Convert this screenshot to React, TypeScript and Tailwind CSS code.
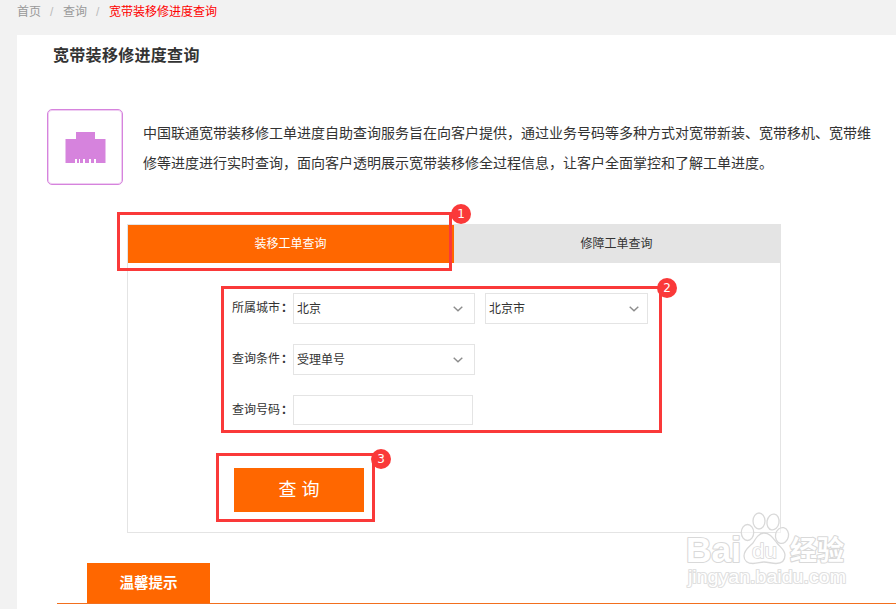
import React from "react";

function Chevron() {
  return (
    <svg width="10" height="6" viewBox="0 0 10 6" className="shrink-0" fill="none" stroke="#8c8c8c" strokeWidth="1.4">
      <path d="M0.7 0.7 L5 4.7 L9.3 0.7" />
    </svg>
  );
}

function Select({ value, size }: { value: string; size: string }) {
  return (
    <div className={`flex h-[31px] items-center justify-between border border-[#e4e4e4] bg-white pl-[3px] ${size}`}>
      <span>{value}</span>
      <Chevron />
    </div>
  );
}

function Label({ children }: { children: React.ReactNode }) {
  return (
    <span className="flex h-[29px] w-[61px] shrink-0 items-center gap-px whitespace-nowrap">
      <span>{children}</span>
      <span className="w-2.5 font-bold">：</span>
    </span>
  );
}

function Marker({ n, box, dot }: { n: number; box: string; dot: string }) {
  return (
    <div className={`pointer-events-none absolute border-3 border-[#fa3939] ${box}`}>
      <span
        className={`absolute flex size-5 items-center justify-center rounded-full bg-[#fa3939] font-['DejaVu_Sans',sans-serif] text-xs leading-none text-white ${dot}`}
      >
        {n}
      </span>
    </div>
  );
}

function Watermark() {
  return (
    <svg className="absolute top-[508px] left-[682px]" width="172" height="84" viewBox="0 0 172 84" fill="#fff" stroke="#d9d9d9">
      <text x="4" y="54" fontFamily="'Liberation Sans', sans-serif" fontWeight="bold" fontSize="35" strokeWidth="2.2" strokeLinejoin="round" paintOrder="stroke" textLength="55" lengthAdjust="spacingAndGlyphs">
        Bai
      </text>
      <g strokeWidth="1.3" fillOpacity="0.5">
        <ellipse cx="65.500" cy="24.500" rx="6.200" ry="8" />
        <ellipse cx="77" cy="13" rx="6" ry="8" />
        <ellipse cx="91" cy="14" rx="6" ry="8" transform="rotate(10 91 14)" />
        <ellipse cx="100" cy="27.500" rx="6.500" ry="8" transform="rotate(12 100 27.500)" />
        <path d="M82 25C77 25 74 30 71 35C67 39 62 42 62 48C62 53 66 55.500 71 55.500C76 55.500 78 54 82 54C86 54 90 55.500 94 55.500C100 55.500 103 52 103 47C103 42 98 39 95 35C91 30 88 25 82 25Z" />
      </g>
      <text x="70" y="50" fontFamily="'Liberation Sans', sans-serif" fontSize="21" strokeWidth="1.500" paintOrder="stroke" textLength="25" lengthAdjust="spacingAndGlyphs">
        du
      </text>
      <text x="108" y="52" fontFamily="'Noto Sans CJK SC', sans-serif" fontWeight="bold" fontSize="27" strokeWidth="2.2" strokeLinejoin="round" paintOrder="stroke">
        经验
      </text>
      <text x="6" y="75" fontFamily="'Liberation Sans', sans-serif" fontSize="18" strokeWidth="2" stroke="#e0e0e0" strokeLinejoin="round" paintOrder="stroke" textLength="158" lengthAdjust="spacingAndGlyphs">
        jingyan.baidu.com
      </text>
    </svg>
  );
}

export default function App() {
  return (
    <div className="relative flex h-[609px] w-[896px] flex-col overflow-hidden bg-[#f2f2f2] font-['Liberation_Sans','Noto_Sans_CJK_SC',sans-serif] text-xs text-[#333]">
      <nav className="flex h-[35px] shrink-0 pt-1 pl-[17px] leading-4 text-[#999]">
        <span className="w-[33px]">首页</span>
        <span className="w-[13px] text-[#bbb]">/</span>
        <span className="w-[33px]">查询</span>
        <span className="w-[13px] text-[#bbb]">/</span>
        <span className="text-[#f00]">宽带装移修进度查询</span>
      </nav>

      <main className="ml-[17px] flex-1 bg-white">
        <h1 className="h-[74px] pt-[9px] pl-9 text-base leading-6 font-bold tracking-[0.3px]">宽带装移修进度查询</h1>

        <section className="flex pl-[30px]">
          <div className="flex size-[76px] shrink-0 items-center justify-center rounded-[5px] border border-[#d683dd] shadow-[inset_0_0_0_1px_#efcef2]">
            <svg width="42" height="32" viewBox="0 0 42 32" fill="#d683dd" className="mt-0.5 ml-px">
              <path d="M11 0H30V7H40.500V31H31V27H29V31H26V27H24V31H20V27H18V31H15V27H10V31H0.500V7H11Z" />
              <path d="M12 27H14V31H12Z" />
            </svg>
          </div>
          <p className="ml-5 pt-[9px] text-sm leading-[30px] whitespace-nowrap">
            中国联通宽带装移修工单进度自助查询服务旨在向客户提供，通过业务号码等多种方式对宽带新装、宽带移机、宽带维
            <br />
            修等进度进行实时查询，面向客户透明展示宽带装移修全过程信息，让客户全面掌控和了解工单进度。
          </p>
        </section>

        <section className="mt-[39px] ml-[110px] h-[309px] w-[654px] border border-[#e4e4e4]">
          <div className="flex h-[38px]">
            <div className="flex w-[326px] items-center justify-center bg-[#ff6700] pr-px text-white">装移工单查询</div>
            <div className="flex flex-1 items-center justify-center bg-[#e4e4e4] pr-px">修障工单查询</div>
          </div>
          <div className="flex flex-col gap-5 pt-[30px] pl-[104px]">
            <div className="flex">
              <Label>所属城市</Label>
              <Select value="北京" size="w-[182px] pr-[11px]" />
              <div className="ml-2.5">
                <Select value="北京市" size="w-[163px] pr-2" />
              </div>
            </div>
            <div className="flex">
              <Label>查询条件</Label>
              <Select value="受理单号" size="w-[182px] pr-[11px]" />
            </div>
            <div className="flex">
              <Label>查询号码</Label>
              <div className="h-[30px] w-[180px] border border-[#e4e4e4]" />
            </div>
          </div>
          <button className="mt-[43px] ml-[106px] flex h-11 w-[130px] items-center justify-center bg-[#ff6700] text-lg text-white">
            查 询
          </button>
        </section>

        <section className="mt-[30px] ml-10 border-b border-[#f26f1e]">
          <h2 className="ml-[30px] flex h-10 w-[123px] items-center justify-center bg-[#ff6700] pt-0.5 text-[14.500px] font-bold text-white">
            温馨提示
          </h2>
        </section>
      </main>

      <Marker n={1} box="top-[212px] left-[117px] h-[59px] w-[335px]" dot="-top-[11px] -right-[22px]" />
      <Marker n={2} box="top-[286px] left-[221px] h-[147px] w-[441px]" dot="-top-[11px] -right-[18px]" />
      <Marker n={3} box="top-[453px] left-[216px] h-[69px] w-[159px]" dot="-top-[7px] -right-[19px]" />
      <Watermark />
    </div>
  );
}
